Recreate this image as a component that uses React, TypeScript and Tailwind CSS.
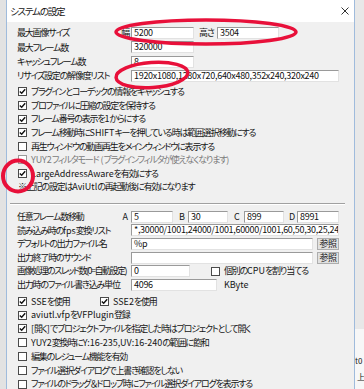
import React from "react";

const boxCls =
  "h-[12px] shrink-0 bg-white border border-t-[#9a9a9a] border-l-[#9a9a9a] border-r-[#e2e2e2] border-b-[#e2e2e2] pl-[2px] leading-[10px] overflow-hidden whitespace-nowrap text-[#111] tracking-[-0.3px]";

// kana/kanji run tighter than latin in the old UI font, so keep latin at normal spacing
function T({ s }: { s: string }) {
  const parts = s.split(/([\x20-\x7e]+)/);
  return (
    <>
      {parts.map((p, i) =>
        i % 2 === 1 ? (
          <span key={i} className="tracking-normal">
            {p}
          </span>
        ) : (
          p
        )
      )}
    </>
  );
}

function Check({ on, dim }: { on?: boolean; dim?: boolean }) {
  return (
    <div
      className={
        dim
          ? "w-[9px] h-[9px] shrink-0 bg-white border border-[#9a9a9a]"
          : "w-[9px] h-[9px] shrink-0 bg-white border border-[#4a4a4a]"
      }
    >
      {on && (
        <svg width="7" height="7" viewBox="0 0 7 7" className="block">
          <path d="M0.8 3.4 L2.7 5.3 L6.2 1.3" fill="none" stroke="#111" strokeWidth="1.4" />
        </svg>
      )}
    </div>
  );
}

function CheckRow({ on, dim, h, s }: { on?: boolean; dim?: boolean; h?: string; s: string }) {
  return (
    <div className={(h || "h-[13.6px]") + " flex items-center gap-[4px] pl-[1px] whitespace-nowrap"}>
      <Check on={on} dim={dim} />
      <span className={dim ? "text-[#7a7a7a]" : ""}>
        <T s={s} />
      </span>
    </div>
  );
}

function Btn() {
  return (
    <div className="w-[22px] h-[12px] shrink-0 ml-[4px] bg-[#e1e1e1] border border-[#adadad] flex items-center justify-center leading-[10px] tracking-[-0.5px]">
      参照
    </div>
  );
}

function Label({ s }: { s: string }) {
  return (
    <div className="w-[114px] shrink-0 whitespace-nowrap">
      <T s={s} />
    </div>
  );
}

export default function App() {
  return (
    <div className="relative w-[364px] h-[389px] overflow-hidden flex bg-[#e4e4e4] font-['Noto_Sans_CJK_JP','Noto_Sans',sans-serif] [font-feature-settings:'palt'] text-[9px] tracking-[-1.2px] text-[#151515]">
      <div className="w-[6px] shrink-0 bg-[#e2e2e2]" />

      <div className="w-[349px] shrink-0 flex flex-col border-x border-[#9fbbdc] bg-[#f0f0f0]">
        <div className="h-[22px] shrink-0 bg-white flex items-center justify-between pl-[3px] pr-[5px] text-[9.5px]">
          <span>システムの設定</span>
          <svg width="8" height="8" viewBox="0 0 8 8">
            <path d="M0.5 0.5 L7.5 7.5 M7.5 0.5 L0.5 7.5" stroke="#333" strokeWidth="1" />
          </svg>
        </div>

        <div className="flex flex-col pl-[10px] pt-[4px]">
          <div className="h-[14.3px] flex items-center">
            <div className="w-[114px] shrink-0 flex justify-between pr-[2px]">
              <span>最大画像サイズ</span>
              <span>幅</span>
            </div>
            <div className={boxCls + " w-[63px]"}>5200</div>
            <span className="w-[23px] shrink-0 pl-[5px]">高さ</span>
            <div className={boxCls + " w-[62px]"}>3504</div>
          </div>
          <div className="h-[14.3px] flex items-center">
            <Label s="最大フレーム数" />
            <div className={boxCls + " w-[63px]"}>320000</div>
          </div>
          <div className="h-[14.3px] flex items-center">
            <Label s="キャッシュフレーム数" />
            <div className={boxCls + " w-[63px]"}>8</div>
          </div>
          <div className="h-[14.3px] flex items-center">
            <Label s="リサイズ設定の解像度リスト" />
            <div className={boxCls + " w-[208px]"}>1920x1080,1280x720,640x480,352x240,320x240</div>
          </div>

          <div className="mt-[2px] flex flex-col">
            <CheckRow on s="プラグインとコーデックの情報をキャッシュする" />
            <CheckRow on s="プロファイルに圧縮の設定を保持する" />
            <CheckRow on s="フレーム番号の表示を1からにする" />
            <CheckRow on s="フレーム移動時にSHIFTキーを押している時は範囲選択移動にする" />
            <CheckRow s="再生ウィンドウの動画再生をメインウィンドウに表示する" />
            <CheckRow dim s="YUY2フィルタモード (プラグインフィルタが使えなくなります)" />
            <CheckRow on s="LargeAddressAwareを有効にする" />
            <div className="h-[13.6px] flex items-center pl-[1px] whitespace-nowrap">
              <T s="※上記の設定はAviUtlの再起動後に有効になります" />
            </div>
          </div>
        </div>

        <div className="mt-[9px] mx-[3px] w-[335px] border-t border-[#a0a0a0] border-b border-b-white" />

        <div className="flex flex-col pl-[10px] mt-[5px]">
          <div className="h-[13.6px] flex items-center">
            <div className="w-[114px] shrink-0 flex justify-between pr-[3px]">
              <span>任意フレーム数移動</span>
              <span className="tracking-normal">A</span>
            </div>
            <div className={boxCls + " w-[42px]"}>5</div>
            <span className="w-[15px] shrink-0 pl-[6px] tracking-normal">B</span>
            <div className={boxCls + " w-[40px]"}>30</div>
            <span className="w-[16px] shrink-0 pl-[6px] tracking-normal">C</span>
            <div className={boxCls + " w-[40px]"}>899</div>
            <span className="w-[13px] shrink-0 pl-[5px] tracking-normal">D</span>
            <div className={boxCls + " w-[42px]"}>8991</div>
          </div>
          <div className="h-[13.6px] flex items-center">
            <Label s="読み込み時のfps変換リスト" />
            <div className={boxCls + " w-[208px]"}>*,30000/1001,24000/1001,60000/1001,60,50,30,25,24,1</div>
          </div>
          <div className="h-[13.6px] flex items-center">
            <Label s="デフォルトの出力ファイル名" />
            <div className={boxCls + " w-[182px]"}>%p</div>
            <Btn />
          </div>
          <div className="h-[13.6px] flex items-center">
            <Label s="出力終了時のサウンド" />
            <div className={boxCls + " w-[182px]"}></div>
            <Btn />
          </div>
          <div className="h-[13.6px] flex items-center">
            <div className="w-[114px] shrink-0 whitespace-nowrap tracking-[-1.5px]">画像処理のスレッド数(0=自動設定)</div>
            <div className={boxCls + " w-[59px]"}>0</div>
            <div className="ml-[21px] flex items-center gap-[4px]">
              <Check />
              <span>
                <T s="個別のCPUを割り当てる" />
              </span>
            </div>
          </div>
          <div className="h-[13.6px] flex items-center">
            <Label s="出力時のファイル書き込み単位" />
            <div className={boxCls + " w-[86px]"}>4096</div>
            <span className="ml-[7px] tracking-normal">KByte</span>
          </div>

          <div className="mt-[3px] flex flex-col">
            <div className="h-[13.8px] flex items-center pl-[1px]">
              <div className="w-[82px] shrink-0 flex items-center gap-[4px]">
                <Check on />
                <span>
                  <T s="SSEを使用" />
                </span>
              </div>
              <div className="flex items-center gap-[4px]">
                <Check on />
                <span>
                  <T s="SSE2を使用" />
                </span>
              </div>
            </div>
            <CheckRow on h="h-[13.8px]" s="aviutl.vfpをVFPlugin登録" />
            <CheckRow on h="h-[13.8px]" s="[開く]でプロジェクトファイルを指定した時はプロジェクトとして開く" />
            <CheckRow h="h-[13.8px]" s="YUY2変換時にY:16-235,UV:16-240の範囲に飽和" />
            <CheckRow h="h-[13.8px]" s="編集のレジューム機能を有効" />
            <CheckRow h="h-[13.8px]" s="ファイル選択ダイアログで上書き確認をしない" />
            <CheckRow h="h-[13.8px]" s="ファイルのドラッグ＆ドロップ時にファイル選択ダイアログを表示する" />
          </div>
        </div>
      </div>

      <div className="flex-1 flex flex-col overflow-hidden bg-[#e8e8e8]">
        <div className="flex-1" />
        <div className="bg-[#f7f7f7] h-[60px] flex flex-col justify-end pb-[4px] text-[8px] leading-[16px] whitespace-nowrap tracking-normal">
          <span>t0</span>
          <span className="pl-[2px]">上</span>
        </div>
      </div>

      <svg className="absolute inset-0 pointer-events-none" width="364" height="389" viewBox="0 0 364 389">
        <ellipse cx="206" cy="32" rx="90" ry="12" fill="none" stroke="#e8103a" strokeWidth="3.5" />
        <ellipse cx="152" cy="75" rx="36" ry="12.5" fill="none" stroke="#e8103a" strokeWidth="3.5" transform="rotate(-4 152 75)" />
        <ellipse cx="18" cy="176" rx="15" ry="15.5" fill="none" stroke="#e8103a" strokeWidth="4" />
      </svg>
    </div>
  );
}
